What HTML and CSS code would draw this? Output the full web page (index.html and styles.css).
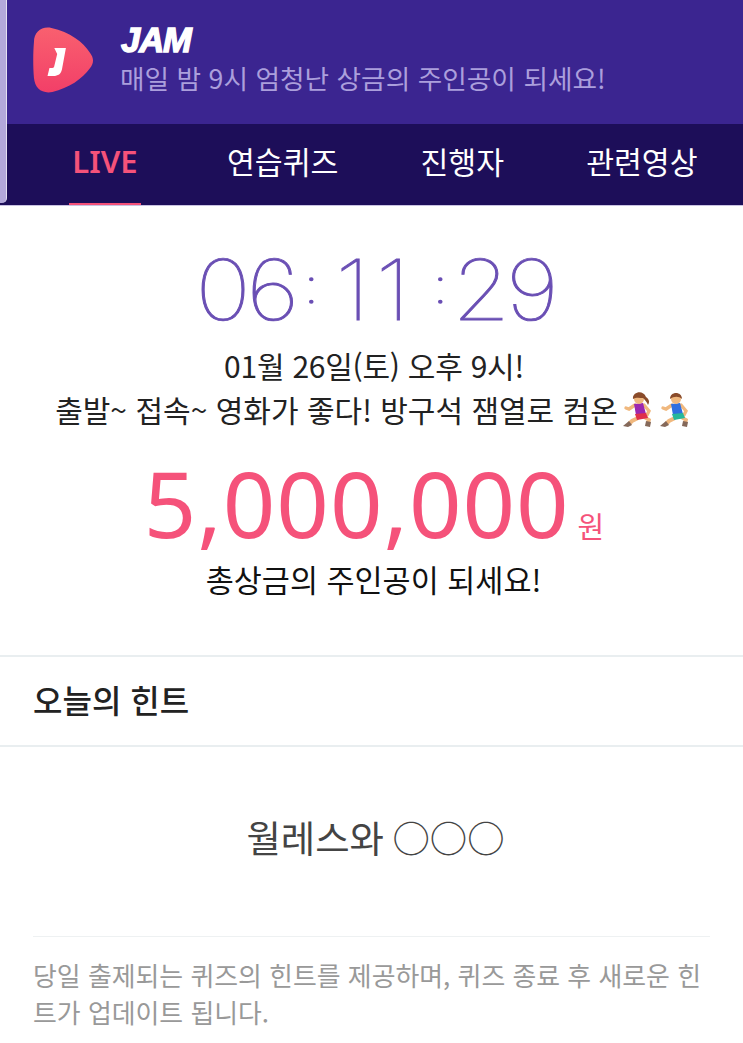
FILE: index.html
```html
<!DOCTYPE html>
<html lang="ko">
<head>
    <meta charset="UTF-8">
    <meta name="viewport" content="width=device-width, initial-scale=1.0">
    <title>JAM</title>
    <link rel="stylesheet" href="styles.css">
</head>
<body>
    <div class="page">
        <div class="edge"></div>

        <header class="banner">
            <svg class="logo" viewBox="0 0 62 66" width="60" height="66" preserveAspectRatio="none">
                <defs>
                    <linearGradient id="logo-grad" x1="0" y1="0" x2="0" y2="1">
                        <stop offset="0" stop-color="#f9606f"/>
                        <stop offset="1" stop-color="#f23f68"/>
                    </linearGradient>
                </defs>
                <path d="M1 15C1 5 9-1 19 1C38 5 52 15 59 26C63 31 63 36 59 41C51 52 37 61 20 65C9 67 2 61 1 51C0 40 0 26 1 15Z" fill="url(#logo-grad)"/>
                <path d="M23 21H35L31 42C30 47 27 49 22 49H16L18 41H21C22 41 23 40 23 39L26 27Z" fill="#fff" transform="translate(-1 0)"/>
            </svg>
            <div class="banner-text">
                <div class="brand">JAM</div>
                <div class="slogan">매일 밤 9시 엄청난 상금의 주인공이 되세요!</div>
            </div>
        </header>

        <nav class="tabs">
            <a class="tab tab-live">LIVE</a>
            <a class="tab tab-practice">연습퀴즈</a>
            <a class="tab tab-host">진행자</a>
            <a class="tab tab-video">관련영상</a>
        </nav>

        <section class="countdown">
            <div class="timer">
                <span class="pair">06</span><span class="colon colon-first">:</span><span class="ones">11</span><span class="colon colon-second">:</span><span class="pair">29</span>
            </div>
            <p class="schedule schedule-date">01월 26일(토) 오후 9시!</p>
            <p class="schedule line-emoji">출발~ 접속~ 영화가 좋다! 방구석 잼열로 컴온<svg class="runner" viewBox="0 0 28 36" width="28" height="36">
                    <path d="M21 26L26 29L25 33" fill="none" stroke="#f0b87e" stroke-width="3.6"/>
                    <path d="M23 30L28 31L27 36L22 35Z" fill="#85695a"/>
                    <path d="M15 27L9 30L6 33" fill="none" stroke="#f0b87e" stroke-width="4"/>
                    <path d="M6 30L9 34L5 36L0 35Z" fill="#85695a"/>
                    <path d="M12 14L6 18L3 17" fill="none" stroke="#f0b87e" stroke-width="3.4" stroke-linecap="round"/>
                    <path d="M21 14L26 20L24 24" fill="none" stroke="#f0b87e" stroke-width="3.4" stroke-linecap="round"/>
                    <path d="M11 13L20 12L23 23L13 24Z" fill="#9c27b0"/>
                    <path d="M12 23L23 22L25 27L14 29Z" fill="#e0314b"/>
                    <circle cx="16" cy="8" r="5" fill="#f0b87e"/>
                    <path d="M10 8C9 1 20-2 23 6C26 8 27 11 25 14C24 11 22 9 20 7C17 7 13 6 10 8Z" fill="#8a4b2a"/>
                </svg><svg class="runner runner-man" viewBox="0 0 28 36" width="28" height="36">
                    <path d="M21 26L26 29L25 33" fill="none" stroke="#f0b87e" stroke-width="3.6"/>
                    <path d="M23 30L28 31L27 36L22 35Z" fill="#85695a"/>
                    <path d="M15 27L9 30L6 33" fill="none" stroke="#f0b87e" stroke-width="4"/>
                    <path d="M6 30L9 34L5 36L0 35Z" fill="#85695a"/>
                    <path d="M12 14L6 18L3 17" fill="none" stroke="#f0b87e" stroke-width="3.4" stroke-linecap="round"/>
                    <path d="M21 14L26 20L24 24" fill="none" stroke="#f0b87e" stroke-width="3.4" stroke-linecap="round"/>
                    <path d="M11 13L20 12L23 23L13 24Z" fill="#2f6fe0"/>
                    <path d="M12 23L23 22L25 27L14 29Z" fill="#27b89a"/>
                    <circle cx="16" cy="8" r="5" fill="#f0b87e"/>
                    <path d="M10 8C10 0 22 0 22 8C19 5 14 5 10 8Z" fill="#8a4b2a"/>
                </svg></p>
            <div class="prize">
                <span class="prize-amount">5,000,000</span><span class="prize-unit">원</span>
            </div>
            <p class="prize-note">총상금의 주인공이 되세요!</p>
        </section>

        <h2 class="hint-title">오늘의 힌트</h2>

        <section class="hint">
            <div class="hint-word">월레스와 ○○○</div>
            <p class="hint-desc">당일 출제되는 퀴즈의 힌트를 제공하며, 퀴즈 종료 후 새로운 힌트가 업데이트 됩니다.</p>
        </section>
    </div>
</body>
</html>
```

FILE: styles.css
```css
:root {
    --purple: #3b2590;
    --dark-purple: #1d0e59;
    --pink: #f5527a;
    --line: #e9eef0;
}

* {
    box-sizing: border-box;
    margin: 0;
    padding: 0;
}

body {
    background-color: #fff;
    color: #222;
    font-family: 'Noto Sans CJK KR', 'Noto Sans', sans-serif;
}

.page {
    position: relative;
    width: 743px;
    height: 1043px;
    overflow: hidden;
}

/* slim strip on the left of the header */
.edge {
    position: absolute;
    left: 0;
    top: 0;
    width: 7px;
    height: 203px;
    background-color: #b3a8da;
    border-right: 1px solid #e4dff2;
    border-bottom-right-radius: 5px;
}

.banner {
    height: 124px;
    background-color: var(--purple);
    display: flex;
    align-items: flex-start;
    padding: 27px 0 0 33px;
}

.logo {
    flex-shrink: 0;
}

.banner-text {
    margin-left: 27px;
}

.brand {
    margin-top: -5px;
    margin-left: 1px;
    font-family: 'Liberation Sans', sans-serif;
    font-size: 34.5px;
    line-height: 36px;
    font-weight: 700;
    font-style: italic;
    letter-spacing: -1px;
    color: #fff;
    -webkit-text-stroke: 1.4px #fff;
}

.slogan {
    margin-top: 3px;
    font-size: 26.7px;
    line-height: 34px;
    color: #ab9fdc;
    white-space: nowrap;
}

.tabs {
    height: 82px;
    background-color: var(--dark-purple);
    display: flex;
    border-bottom: 1px solid #c9c2e2;
}

.tab {
    height: 81px;
    line-height: 75px;
    font-size: 30.3px;
    font-weight: 400;
    color: #fff;
    white-space: nowrap;
    text-align: center;
}

.tab-live {
    width: 72px;
    margin-left: 69px;
    font-size: 31px;
    color: var(--pink);
    font-family: 'Noto Sans', sans-serif;
    font-weight: 600;
    border-bottom: 2px solid var(--pink);
}

.tab-practice {
    margin-left: 86px;
}

.tab-host {
    margin-left: 82px;
}

.tab-video {
    margin-left: 82px;
}

.countdown {
    height: 451px;
    text-align: center;
    border-bottom: 2px solid var(--line);
}

/* the thin digits are rounder in the original, so widen them a bit */
.timer {
    height: 137px;
    padding: 36px 0 0 6px;
    display: flex;
    justify-content: center;
    font-family: 'Inter', sans-serif;
    font-weight: 100;
    font-size: 84px;
    line-height: 96px;
    color: #6a4fb4;
    -webkit-text-stroke: 0.9px #6a4fb4;
    transform: scaleX(1.12);
}

.pair {
    letter-spacing: -4px;
}

.ones {
    letter-spacing: 5px;
}

.colon {
    font-size: 48px;
    line-height: 88px;
    -webkit-text-stroke: 1.6px #6a4fb4;
}

.colon-first {
    margin: 0 15px 0 8px;
}

.colon-second {
    margin: 0 4px 0 15.5px;
}

.schedule {
    font-size: 30px;
    line-height: 44px;
    color: #222;
    white-space: nowrap;
}

.schedule-date {
    padding-left: 5px;
    letter-spacing: -0.25px;
}

.line-emoji {
    display: flex;
    justify-content: center;
    align-items: center;
}

.runner {
    flex-shrink: 0;
    margin-left: 5px;
}

.runner-man {
    margin-left: 9px;
}

.prize {
    margin-top: 25px;
    height: 94px;
    padding-left: 5px;
    display: flex;
    justify-content: center;
    align-items: baseline;
    color: var(--pink);
}

.prize-amount {
    font-family: 'Noto Sans', sans-serif;
    font-size: 92px;
    line-height: 94px;
    letter-spacing: 0.9px;
}

.prize-unit {
    margin-left: 8px;
    font-size: 29px;
    line-height: 30px;
}

.prize-note {
    margin-top: 7px;
    padding-left: 4px;
    font-size: 30.5px;
    line-height: 44px;
    color: #111;
}

.hint-title {
    height: 90px;
    line-height: 85px;
    padding-left: 33px;
    font-size: 32px;
    font-weight: 500;
    color: #222;
    border-bottom: 2px solid var(--line);
}

.hint {
    padding: 0 33px;
}

.hint-word {
    height: 190px;
    line-height: 181px;
    padding-left: 8px;
    word-spacing: -2px;
    text-align: center;
    font-size: 37.4px;
    color: #444;
    border-bottom: 1px solid #eef1f2;
}

.hint-desc {
    margin-top: 19px;
    font-size: 25.9px;
    line-height: 37px;
    color: #999;
}
```
